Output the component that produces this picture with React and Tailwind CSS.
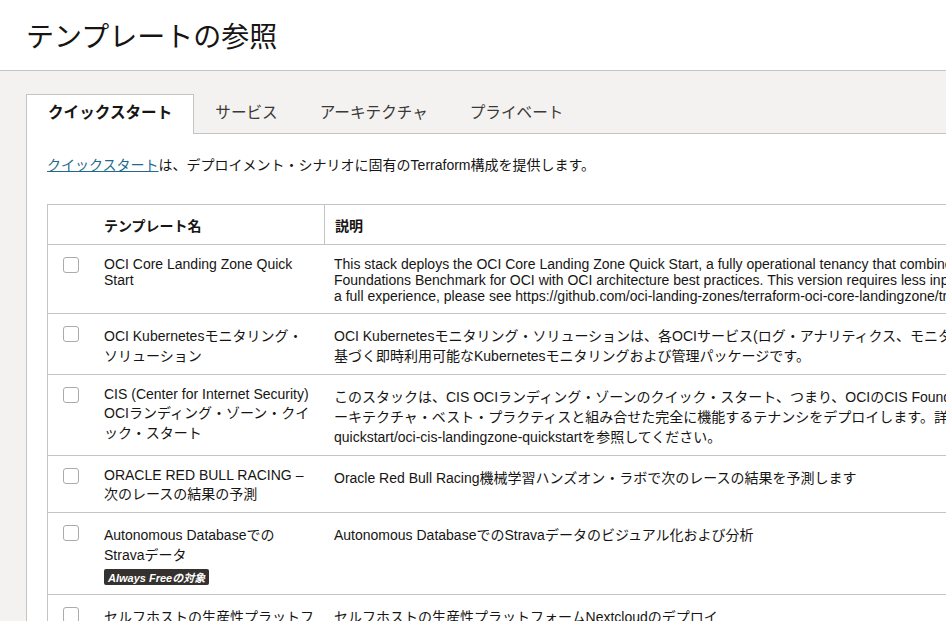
const tabs = ["クイックスタート", "サービス", "アーキテクチャ", "プライベート"];

const templates = [
  {
    name: "OCI Core Landing Zone Quick Start",
    lines: [
      "This stack deploys the OCI Core Landing Zone Quick Start, a fully operational tenancy that combines CIS",
      "Foundations Benchmark for OCI with OCI architecture best practices. This version requires less input. For",
      "a full experience, please see https://github.com/oci-landing-zones/terraform-oci-core-landingzone/tree/main.",
    ],
  },
  {
    name: "OCI Kubernetesモニタリング・ソリューション",
    lines: [
      "OCI Kubernetesモニタリング・ソリューションは、各OCIサービス(ログ・アナリティクス、モニタリング、管理エージェント)に",
      "基づく即時利用可能なKubernetesモニタリングおよび管理パッケージです。",
    ],
  },
  {
    name: "CIS (Center for Internet Security) OCIランディング・ゾーン・クイック・スタート",
    lines: [
      "このスタックは、CIS OCIランディング・ゾーンのクイック・スタート、つまり、OCIのCIS Foundations BenchmarkとOCIア",
      "ーキテクチャ・ベスト・プラクティスと組み合せた完全に機能するテナンシをデプロイします。詳細は、https://github.com/oracle-",
      "quickstart/oci-cis-landingzone-quickstartを参照してください。",
    ],
  },
  {
    name: "ORACLE RED BULL RACING – 次のレースの結果の予測",
    lines: ["Oracle Red Bull Racing機械学習ハンズオン・ラボで次のレースの結果を予測します"],
  },
  {
    name: "Autonomous Databaseでの\nStravaデータ",
    lines: ["Autonomous DatabaseでのStravaデータのビジュアル化および分析"],
    free: true,
  },
  {
    name: "セルフホストの生産性プラットフォームNextcloud",
    lines: ["セルフホストの生産性プラットフォームNextcloudのデプロイ"],
  },
];

function Checkbox() {
  return (
    <span className="mt-[1px] block h-4 w-4 rounded-[3px] border border-[#ababab] bg-white" />
  );
}

export default function App() {
  return (
    <div className="h-screen overflow-hidden bg-[#f3f2f0] font-['Liberation_Sans','Noto_Sans_CJK_JP',sans-serif] leading-[normal] text-[#161513]">
      <header className="flex h-[71px] items-center border-b border-[#c4c4c4] bg-white pl-[26px]">
        <h1 className="text-[28px] font-normal">テンプレートの参照</h1>
      </header>

      <div className="w-max pl-[26px] pt-[23px]">
        <div className="flex">
          {tabs.map((tab, i) =>
            i === 0 ? (
              <div
                key={tab}
                className="relative z-10 -mb-px h-[40px] border border-b-0 border-[#c4c4c4] bg-white px-[21px] pt-[5px] text-[15.6px] font-bold"
              >
                {tab}
              </div>
            ) : (
              <div
                key={tab}
                className="h-[39px] px-[21px] pt-[6px] text-[15.6px] text-[#3b3936]"
              >
                {tab}
              </div>
            )
          )}
        </div>

        <section className="border-l border-t border-[#c4c4c4] bg-white pl-5 pt-5">
          <p className="text-[14px]">
            <a href="#" className="text-[#1f6b8e] underline">
              クイックスタート
            </a>
            は、デプロイメント・シナリオに固有のTerraform構成を提供します。
          </p>

          <div className="mt-[30px] border-l border-t border-[#c4c4c4] text-[14px]">
            <div className="flex h-[40px] border-b border-[#c4c4c4] font-bold">
              <div className="w-[46px]" />
              <div className="flex w-[230px] items-center pl-[10px]">テンプレート名</div>
              <div className="flex w-[860px] items-center border-l border-[#c4c4c4] pl-[10px]">
                説明
              </div>
            </div>

            {templates.map((t) => (
              <div key={t.name} className="flex border-b border-[#c4c4c4]">
                <div className="w-[46px] pl-[15px] pt-[11px]">
                  <Checkbox />
                </div>
                <div className="w-[230px] pb-[9px] pl-[10px] pr-[9px] pt-[11px]">
                  <div className="whitespace-pre-line">{t.name}</div>
                  {t.free && (
                    <span className="mt-[5px] inline-block rounded-[2px] bg-[#35312e] px-[4px] text-[11px] font-bold italic text-white">
                      Always Freeの対象
                    </span>
                  )}
                </div>
                <div className="w-[860px] whitespace-nowrap pb-[9px] pl-[10px] pt-[11px]">
                  {t.lines.map((line, i) => (
                    <span key={i}>
                      {i > 0 && <br />}
                      {line}
                    </span>
                  ))}
                </div>
              </div>
            ))}
          </div>
        </section>
      </div>
    </div>
  );
}
